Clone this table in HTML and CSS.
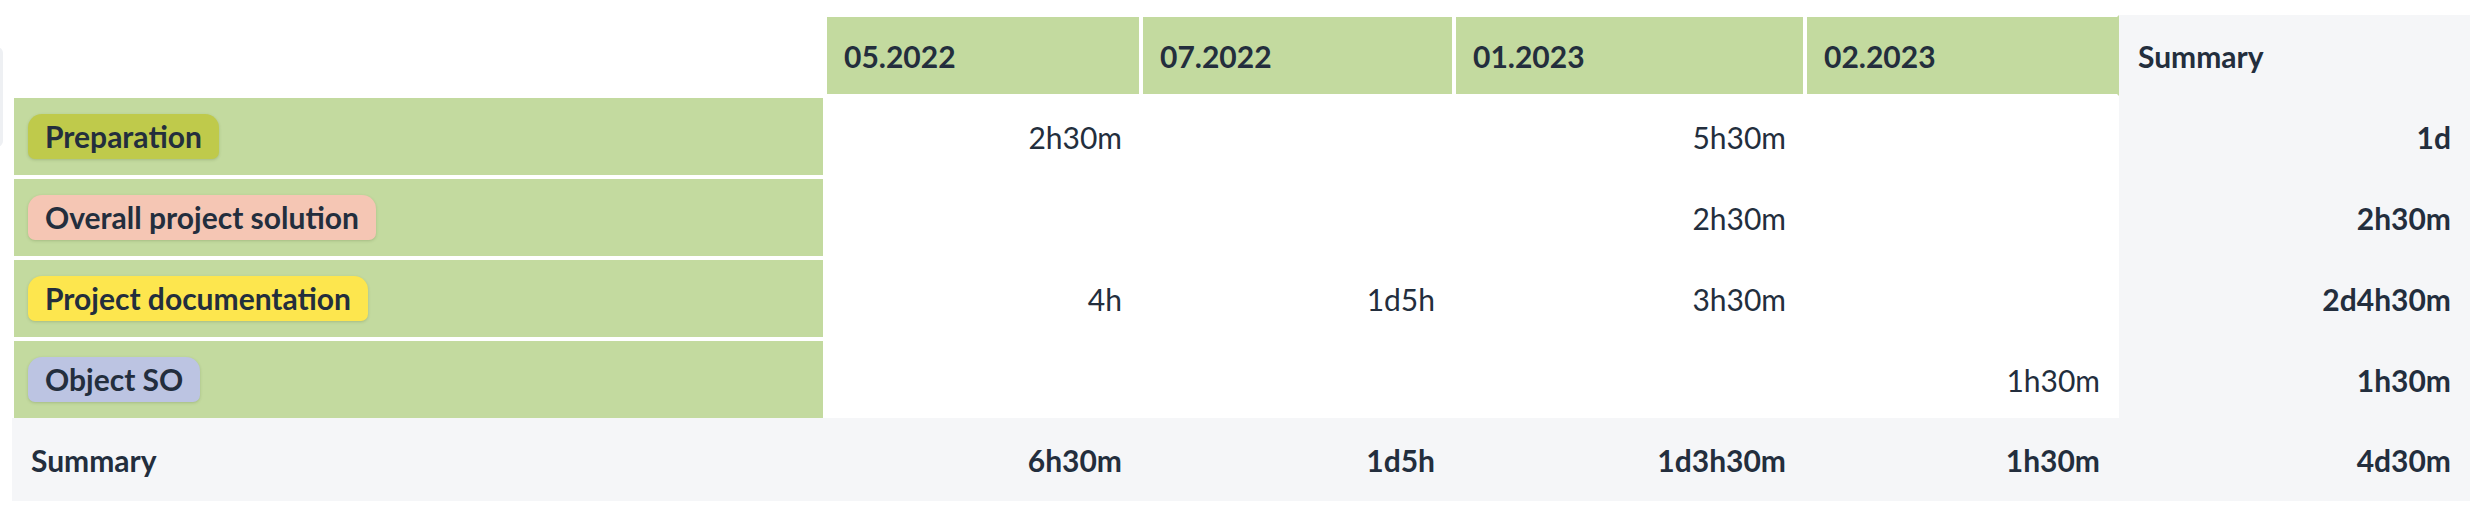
FILE: index.html
```html
<!DOCTYPE html>
<html lang="en">
<head>
<meta charset="utf-8">
<title>Time report</title>
<link rel="stylesheet" href="styles.css">
</head>
<body>
<div class="edge-box"></div>
<div class="report">
  <div class="cell blank"></div>
  <div class="cell head">05.2022</div>
  <div class="cell head">07.2022</div>
  <div class="cell head">01.2023</div>
  <div class="cell head head-last">02.2023</div>
  <div class="cell sum-head">Summary</div>

  <div class="cell label"><span class="badge b-prep">Preparation</span></div>
  <div class="cell val">2h30m</div>
  <div class="cell val"></div>
  <div class="cell val">5h30m</div>
  <div class="cell val"></div>
  <div class="cell sum">1d</div>

  <div class="cell label"><span class="badge b-overall">Overall project solution</span></div>
  <div class="cell val"></div>
  <div class="cell val"></div>
  <div class="cell val">2h30m</div>
  <div class="cell val"></div>
  <div class="cell sum">2h30m</div>

  <div class="cell label"><span class="badge b-doc">Project documentation</span></div>
  <div class="cell val">4h</div>
  <div class="cell val">1d5h</div>
  <div class="cell val">3h30m</div>
  <div class="cell val"></div>
  <div class="cell sum">2d4h30m</div>

  <div class="cell label label-last"><span class="badge b-obj">Object SO</span></div>
  <div class="cell val val-last"></div>
  <div class="cell val val-last"></div>
  <div class="cell val val-last"></div>
  <div class="cell val val-last">1h30m</div>
  <div class="cell sum sum-last">1h30m</div>

  <div class="cell foot foot-label">Summary</div>
  <div class="cell foot">6h30m</div>
  <div class="cell foot">1d5h</div>
  <div class="cell foot">1d3h30m</div>
  <div class="cell foot">1h30m</div>
  <div class="cell foot">4d30m</div>
</div>
</body>
</html>
```
FILE: styles.css
```css
* { box-sizing: border-box; }

html, body {
  margin: 0;
  padding: 0;
  background: #ffffff;
}

body {
  font-family: Lato, "Noto Sans", sans-serif;
  color: #232e3d;
  position: relative;
  width: 2476px;
  height: 510px;
  overflow: hidden;
}

.edge-box {
  position: absolute;
  left: -10px;
  top: 47px;
  width: 13px;
  height: 100px;
  background: #eef0f3;
  border-radius: 6px;
}

.report {
  margin: 15px 0 0 12px;
  display: grid;
  grid-template-columns: 813px 316px 313px 351px 314px 351px;
  grid-template-rows: 81px 81px 81px 81px 79px 83px;
  width: 2458px;
}

.cell {
  display: flex;
  align-items: center;
  padding: 0 17px;
  font-size: 30px;
  line-height: 36px;
  border: 2px solid #ffffff;
  white-space: nowrap;
}

.blank { background: transparent; }

.head {
  background: #c3da9f;
  font-weight: 700;
}

.head-last { border-right-color: #c3da9f; }

.sum-head {
  background: #f5f6f8;
  border-color: #f5f6f8;
  font-weight: 700;
}

.label {
  background: #c3da9f;
  padding-left: 14px;
}

.label-last { border-bottom: 0; }

.badge {
  display: inline-block;
  font-weight: 700;
  line-height: 37px;
  padding: 4px 17px;
  border-radius: 14px 14px 7px 7px;
  box-shadow: 0 1px 3px rgba(60, 80, 30, 0.22);
}

.b-prep { background: #bfca4b; }
.b-overall { background: #f5c6b4; }
.b-doc { background: #fde64e; }
.b-obj { background: #bcc4e2; }

.val {
  background: #ffffff;
  justify-content: flex-end;
  font-weight: 400;
}

.val-last { border-bottom: 0; }

.sum {
  background: #f5f6f8;
  border-color: #f5f6f8;
  justify-content: flex-end;
  font-weight: 700;
}

.sum-last { border-bottom: 0; }

.foot {
  background: #f5f6f8;
  border-color: #f5f6f8;
  justify-content: flex-end;
  font-weight: 700;
}

.foot-label { justify-content: flex-start; }
```
